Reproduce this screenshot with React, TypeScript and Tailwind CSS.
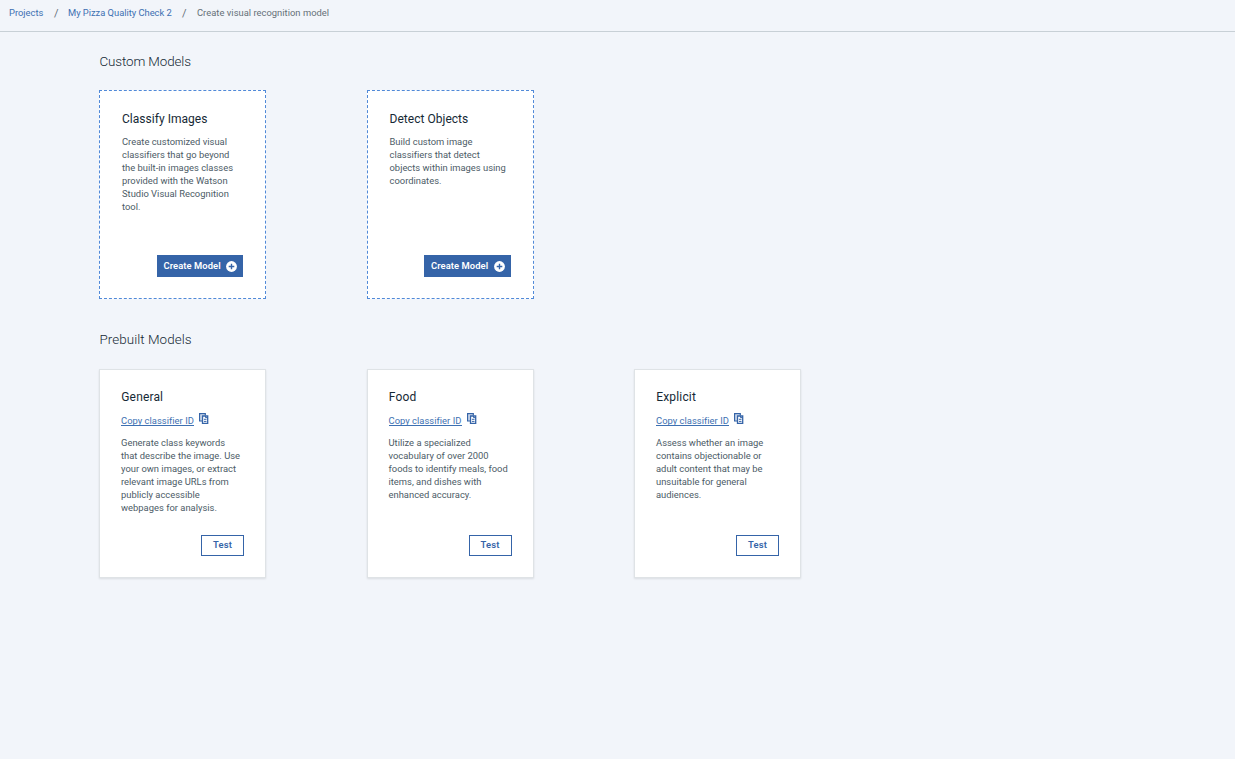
import React from "react";

function PlusIcon() {
  return (
    <svg width="11" height="11" viewBox="0 0 11 11" className="shrink-0">
      <circle cx="5.5" cy="5.5" r="5.4" fill="#fff" />
      <path d="M5.5 2.7v5.6M2.7 5.5h5.6" stroke="#3564a8" strokeWidth="1.4" />
    </svg>
  );
}

function CopyIcon() {
  return (
    <svg width="10" height="11" viewBox="0 0 10 11" className="shrink-0" fill="none" stroke="#3564a8">
      <path d="M3 8H.6V.6h5.7v2" strokeWidth="1.2" fill="#d5dfee" />
      <path d="M3.5 3h5.2v7.4H3.5z" strokeWidth="1.3" fill="#fff" />
      <path d="M6.5 3v1.6h2.2M4.9 6.3h2.6M4.9 8.4h2.6" strokeWidth="1" />
    </svg>
  );
}

const custom = [
  {
    title: "Classify Images",
    lines: ["Create customized visual", "classifiers that go beyond", "the built-in images classes", "provided with the Watson", "Studio Visual Recognition", "tool."],
  },
  {
    title: "Detect Objects",
    lines: ["Build custom image", "classifiers that detect", "objects within images using", "coordinates."],
  },
];

const prebuilt = [
  {
    title: "General",
    lines: ["Generate class keywords", "that describe the image. Use", "your own images, or extract", "relevant image URLs from", "publicly accessible", "webpages for analysis."],
  },
  {
    title: "Food",
    lines: ["Utilize a specialized", "vocabulary of over 2000", "foods to identify meals, food", "items, and dishes with", "enhanced accuracy."],
  },
  {
    title: "Explicit",
    lines: ["Assess whether an image", "contains objectionable or", "adult content that may be", "unsuitable for general", "audiences."],
  },
];

function Description({ lines }: { lines: string[] }) {
  return (
    <p className="text-[9.4px] leading-[13px] tracking-[0.01px] whitespace-nowrap text-[#4c5b66]">
      {lines.map((line) => (
        <span key={line} className="block">{line}</span>
      ))}
    </p>
  );
}

export default function App() {
  return (
    <div className="min-h-screen bg-[#f2f5fa] font-['Roboto',sans-serif] text-[#152935]">
      <nav className="flex h-8 items-start border-b border-[#c8d0d6] pl-[9px] pt-[7px] text-[9.4px] leading-3 whitespace-nowrap text-[#657078]">
        <a className="w-[45px] text-[#3d70b2]">Projects</a>
        <span className="w-[14px] pt-px text-[11px]">/</span>
        <a className="w-[114px] tracking-[-0.03px] text-[#3d70b2]">My Pizza Quality Check 2</a>
        <span className="w-[15px] pt-px text-[11px]">/</span>
        <span className="tracking-[0.02px]">Create visual recognition model</span>
      </nav>
      <main className="pl-[99px]">
        <h2 className="h-[58px] pt-5 pl-[0.5px] text-[13.4px] leading-5 font-light tracking-[-0.12px]">Custom Models</h2>
        <div className="grid grid-cols-[167px_167px] gap-[100.5px]">
          {custom.map((m) => (
            <section key={m.title} className="flex h-[209px] flex-col border border-dashed border-[#5089d8] bg-white pt-[19px] pr-[22px] pb-[21px] pl-[22px]">
              <h3 className="h-[25px] text-[12px] leading-[18px] tracking-[0.03px]">{m.title}</h3>
              <Description lines={m.lines} />
              <button className="mt-auto flex h-[22px] w-[86.5px] items-center justify-between self-end bg-[#3564a8] pr-[6px] pl-[7px] text-[9.4px] font-semibold tracking-[0.08px] whitespace-nowrap text-white">
                Create Model
                <PlusIcon />
              </button>
            </section>
          ))}
        </div>
        <h2 className="h-[70px] pt-[31px] pl-[0.5px] text-[13.4px] leading-5 font-light tracking-[0.06px]">Prebuilt Models</h2>
        <div className="grid grid-cols-[167px_167px_167px] gap-[100.5px]">
          {prebuilt.map((m) => (
            <section key={m.title} className="flex h-[209px] flex-col border border-[#dfe3e6] bg-white pt-[18px] pr-[21px] pb-[21px] pl-[21px] shadow-[0_1px_2px_rgba(0,0,0,0.1)]">
              <h3 className="h-[24px] pl-[0.3px] text-[12px] leading-[18px] tracking-[0.15px]">{m.title}</h3>
              <div className="flex h-6 items-start">
                <a className="mt-[3px] h-[11px] w-[73px] border-b border-[#3d70b2] text-[9.4px] leading-[11px] tracking-[0.03px] whitespace-nowrap text-[#3d70b2]">Copy classifier ID</a>
                <span className="mt-px ml-[5.4px]"><CopyIcon /></span>
              </div>
              <Description lines={m.lines} />
              <button className="mt-auto h-[21px] w-[43px] self-end border border-[#3564a8] pb-px text-[9.4px] leading-[18px] font-semibold tracking-[0.15px] text-[#3564a8]">Test</button>
            </section>
          ))}
        </div>
      </main>
    </div>
  );
}
